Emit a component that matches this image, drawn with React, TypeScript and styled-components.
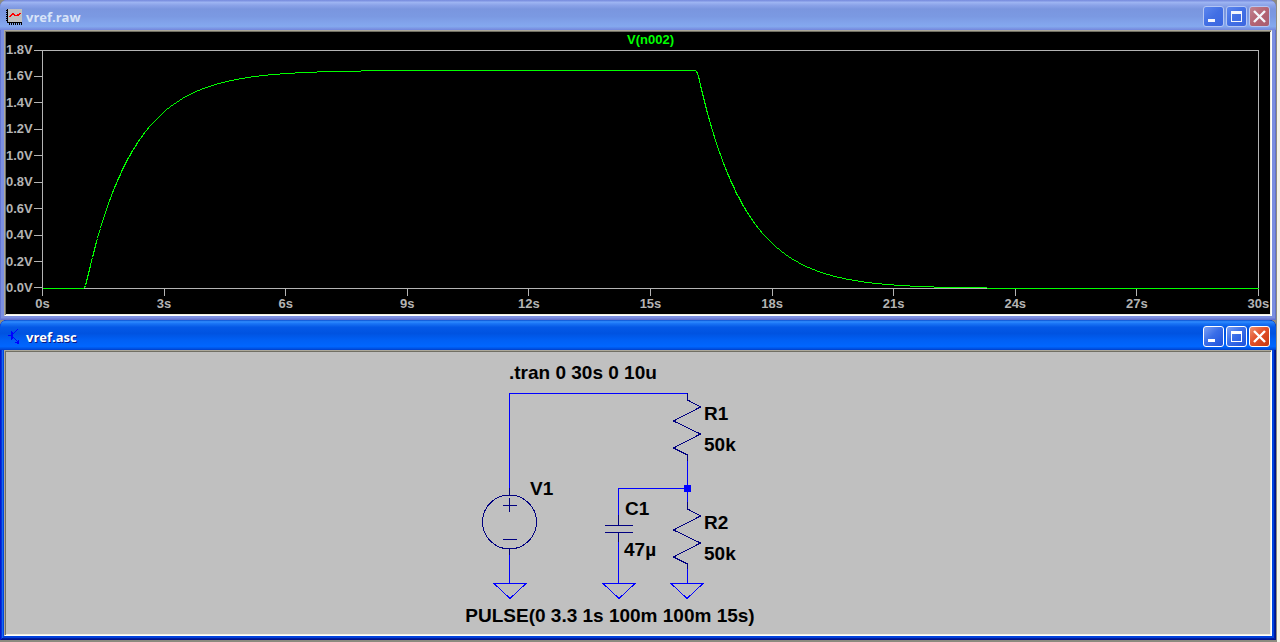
import React from "react";
import styled, { createGlobalStyle, css } from "styled-components";

const GlobalStyle = createGlobalStyle`
  * { box-sizing: border-box; }
  body { margin: 0; background: #ece9d8; }
`;

const Desktop = styled.main`
  display: flex;
  flex-direction: column;
  min-height: 100vh;
  padding-right: 4px;
  padding-bottom: 2px;
  background: linear-gradient(to right, #8d8b80 calc(100% - 3px), #f4f3ea calc(100% - 3px));
`;

const activeFrame = css`
  background: #0043e0;
  box-shadow: inset 1px 0 #0019cf, inset -1px 0 #00138c, inset 0 -1px #00138c, inset 2px 0 #0831d9,
    inset -2px 0 #001ea0, inset 0 -2px #001ea0, inset 3px 0 #166aee, inset 0 -3px #0441d8;
`;

const idleFrame = css`
  background: #7b8fe0;
  box-shadow: inset 1px 0 #6275d3, inset -1px 0 #6472cc, inset 0 -1px #6472cc, inset 0 -2px #7080d8;
`;

const Frame = styled.section<{ $active: boolean }>`
  display: flex;
  flex-direction: column;
  flex: 1 1 0;
  padding: 0 4px 4px;
  border-radius: 7px 7px 0 0;
  ${(p) => (p.$active ? activeFrame : idleFrame)}
`;

const TitleBar = styled.header<{ $active: boolean }>`
  display: flex;
  align-items: center;
  gap: 4px;
  height: 30px;
  margin: 0 -4px;
  padding: 3px 6px 0;
  border-radius: 7px 7px 0 0;
  background: ${(p) =>
    p.$active
      ? "linear-gradient(#0a4fd0 0, #2f8cff 6%, #1a74f5 12%, #0458e6 24%, #0053e1 45%, #0060f5 68%, #0066ff 88%, #0050e0 96%, #003dc8 100%)"
      : "linear-gradient(#7488dc 0, #9db4f2 8%, #8aa2e8 18%, #7a96df 30%, #7b99e2 55%, #82a4ec 78%, #84a8ee 88%, #7a92e2 96%, #7386dc 100%)"};
`;

const Title = styled.h1<{ $active: boolean }>`
  flex: 1;
  margin: 0;
  font: bold 13px/20px "Open Sans", "Noto Sans", sans-serif;
  color: ${(p) => (p.$active ? "#fff" : "#d8e4f8")};
  text-shadow: ${(p) => (p.$active ? "1px 1px #0a1883" : "none")};
`;

const Controls = styled.div`
  display: flex;
  gap: 2px;
`;

const ControlButton = styled.button<{ $active: boolean; $close?: boolean }>`
  display: grid;
  place-items: center;
  width: 21px;
  height: 21px;
  padding: 0;
  border: 1px solid ${(p) => (p.$active ? "#fff" : "#b4c6f4")};
  border-radius: 3px;
  background: ${(p) =>
    p.$close
      ? p.$active
        ? "linear-gradient(135deg, #f0906e, #e2502a 45%, #c8380f)"
        : "linear-gradient(135deg, #c08290, #b46474 50%, #a85c70)"
      : p.$active
        ? "linear-gradient(135deg, #7ba0f4, #3a6ee8 45%, #1c50dc)"
        : "linear-gradient(135deg, #5c86ee, #426fe4 50%, #3b66e0)"};
`;

const Client = styled.div<{ $dark?: boolean }>`
  display: flex;
  flex: 1;
  flex-direction: column;
  border: 1px solid;
  border-color: #aca899 #fff #fff #aca899;
  box-shadow: inset 1px 1px #716f64, inset -1px -1px #f1efe2;
  padding: 1px;
  background: ${(p) => (p.$dark ? "#000" : "#c0c0c0")};
`;

const Chart = styled.figure`
  display: grid;
  flex: 1;
  grid-template: 18px 1fr 25px / 36px 1fr;
  margin: 0;
  padding-right: 11px;
  font: bold 13px/16px "Liberation Sans", Arial, sans-serif;
  color: #b4b4b4;
`;

const TraceName = styled.figcaption`
  grid-column: 1 / -1;
  padding-left: 36px;
  line-height: 16px;
  text-align: center;
  color: #0f0;
`;

const VoltAxis = styled.div`
  display: flex;
  flex-direction: column;
  justify-content: space-between;
  margin: -8px 0 -7px;
`;

const VoltLabel = styled.span`
  display: flex;
  align-items: center;
  &::after {
    content: "";
    flex: 1;
    height: 1px;
    margin-left: 1px;
    background: #b4b4b4;
  }
`;

const PlotArea = styled.div`
  position: relative;
  min-height: 120px;
  border: 1px solid #b4b4b4;
`;

/* The trace is drawn over the plot's border. */
const Trace = styled.svg`
  position: absolute;
  top: -1px;
  left: -1px;
  width: calc(100% + 2px);
  height: calc(100% + 2px);
  overflow: visible;
`;

const TimeAxis = styled.div`
  display: flex;
  grid-column: 2;
  justify-content: space-between;
`;

const TimeLabel = styled.span`
  display: flex;
  flex-direction: column;
  align-items: center;
  width: 1px;
  white-space: nowrap;
  &::before {
    content: "";
    flex: none;
    width: 1px;
    height: 7px;
    background: #b4b4b4;
  }
`;

const Schematic = styled.svg`
  display: block;
  margin: 0 auto;
  font: bold 19px "Liberation Sans", Arial, sans-serif;
`;

const volts = ["1.8V", "1.6V", "1.4V", "1.2V", "1.0V", "0.8V", "0.6V", "0.4V", "0.2V", "0.0V"];
const times = ["0s", "3s", "6s", "9s", "12s", "15s", "18s", "21s", "24s", "27s", "30s"];

const TAU = 1.175;
const PEAK = 1.65;

/* Output of the divider for a 0 to 3.3 V pulse with 100 ms edges. */
function outputVoltage(t: number) {
  const ramp = (x: number) => {
    if (x <= 0) return 0;
    const w = 0.1;
    if (x < w) return (x - TAU * (1 - Math.exp(-x / TAU))) / w;
    return 1 - (TAU / w) * (Math.exp(w / TAU) - 1) * Math.exp(-x / TAU);
  };
  return PEAK * (ramp(t - 1) - ramp(t - 16.1));
}

const tracePoints = Array.from({ length: 1217 }, (_, i) => {
  const y = 238 - (outputVoltage((i / 1216) * 30) / 1.8) * 238;
  return `${i + 0.5},${Math.round(y) + 0.5}`;
}).join(" ");

function ChartIcon() {
  return (
    <svg width="16" height="16" viewBox="0 0 16 16" shapeRendering="crispEdges" aria-hidden="true">
      <path d="M2 0h14v14H2z" fill="#c0c0c0" />
      <path d="M1 0h1v14H1zM1 13h15v1H1z" fill="#000" />
      <path
        d="M0 1h1v1H0zM0 3h1v1H0zM0 5h1v1H0zM0 7h1v1H0zM0 9h1v1H0zM0 11h1v1H0zM3 14h1v2H3zM5 14h1v2H5zM7 14h1v2H7zM9 14h1v2H9zM11 14h1v2h-1zM13 14h1v2h-1zM15 14h1v2h-1z"
        fill="#000"
      />
      <path
        d="M3 7h1v1H3zM4 6h1v2H4zM5 5h1v2H5zM6 4h2v2H6zM8 5h1v2H8zM9 6h3v1H9zM11 5h1v2h-1zM12 5h1v2h-1zM13 4h1v2h-1zM14 4h1v1h-1z"
        fill="#f00"
      />
    </svg>
  );
}

function TransistorIcon() {
  return (
    <svg width="16" height="16" viewBox="0 0 16 16" shapeRendering="crispEdges" aria-hidden="true">
      <path
        d="M2 6h3v1H2zM5 2h1v9H5zM6 3h1v7H6zM7 4h1v1H7zM8 3h1v1H8zM9 2h1v1H9zM10 1h1v1h-1zM11 0h1v1h-1zM7 8h1v1H7zM8 9h1v1H8zM9 10h1v1H9zM10 11h1v1h-1zM11 12h1v1h-1zM9 13h4v1H9zM11 14h2v1h-2zM12 11h1v4h-1z"
        fill="#00f"
      />
    </svg>
  );
}

function WindowControls({ active }: { active: boolean }) {
  const ink = active ? "#fff" : "#f4f6fc";
  return (
    <Controls>
      <ControlButton type="button" aria-label="Minimize" $active={active}>
        <svg width="19" height="19" shapeRendering="crispEdges">
          <path d="M4 12h7v3H4z" fill={ink} />
        </svg>
      </ControlButton>
      <ControlButton type="button" aria-label="Maximize" $active={active}>
        <svg width="19" height="19" shapeRendering="crispEdges">
          <path d="M4 4h11v11H4zM5 7v7h9V7z" fill={ink} fillRule="evenodd" />
        </svg>
      </ControlButton>
      <ControlButton type="button" aria-label="Close" $active={active} $close>
        <svg width="19" height="19">
          <path d="M4 4l11 11M15 4l-11 11" stroke={ink} strokeWidth="2.4" />
        </svg>
      </ControlButton>
    </Controls>
  );
}

interface ChildWindowProps {
  title: string;
  icon: React.ReactNode;
  active?: boolean;
  dark?: boolean;
  children: React.ReactNode;
}

function ChildWindow({ title, icon, active = false, dark, children }: ChildWindowProps) {
  return (
    <Frame $active={active}>
      <TitleBar $active={active}>
        {icon}
        <Title $active={active}>{title}</Title>
        <WindowControls active={active} />
      </TitleBar>
      <Client $dark={dark}>{children}</Client>
    </Frame>
  );
}

function Waveform() {
  return (
    <Chart>
      <TraceName>V(n002)</TraceName>
      <VoltAxis>
        {volts.map((v) => (
          <VoltLabel key={v}>{v}</VoltLabel>
        ))}
      </VoltAxis>
      <PlotArea>
        <Trace viewBox="0 0 1217 239" preserveAspectRatio="none" shapeRendering="crispEdges">
          <polyline
            points={tracePoints}
            fill="none"
            stroke="#0f0"
            vectorEffect="non-scaling-stroke"
          />
        </Trace>
      </PlotArea>
      <TimeAxis>
        {times.map((t) => (
          <TimeLabel key={t}>{t}</TimeLabel>
        ))}
      </TimeAxis>
    </Chart>
  );
}

const RESISTOR = "v7l13 7l-27 14l27 13l-27 14l14 7";

function Circuit() {
  return (
    <Schematic width="360" height="280" viewBox="458 352 360 280">
      <g fill="none" shapeRendering="crispEdges">
        <path
          stroke="#00f"
          d="M509.500 488V393.500H687.500V395M687.500 461V502M618.500 515V488.500H687.500M509.500 555V583M618.500 542V583M687.500 569V583M494 583.500h32l-16 15zM603 583.500h32l-16 15zM671 583.500h32l-16 15z"
        />
        <path
          stroke="#000080"
          d={`M687.500 393${RESISTOR}V461M687.500 502${RESISTOR}V569M509.500 488V495M509.500 548V555M618.500 515V525.500M605 525.500h28M605 532.500h28M618.500 532V542M503 505.500h14M509.500 498v14M503 539.500h14`}
        />
        <circle cx="509.500" cy="522" r="27" stroke="#000080" />
      </g>
      <path d="M684 485h7v7h-7z" fill="#00f" />
      <text x="509" y="379">.tran 0 30s 0 10u</text>
      <text x="704" y="420">R1</text>
      <text x="704" y="451">50k</text>
      <text x="530" y="495">V1</text>
      <text x="625" y="515">C1</text>
      <text x="624" y="556">47µ</text>
      <text x="704" y="529">R2</text>
      <text x="704" y="560">50k</text>
      <text x="610" y="622" textAnchor="middle">
        PULSE(0 3.3 1s 100m 100m 15s)
      </text>
    </Schematic>
  );
}

export default function App() {
  return (
    <>
      <GlobalStyle />
      <Desktop>
        <ChildWindow title="vref.raw" icon={<ChartIcon />} dark>
          <Waveform />
        </ChildWindow>
        <ChildWindow title="vref.asc" icon={<TransistorIcon />} active>
          <Circuit />
        </ChildWindow>
      </Desktop>
    </>
  );
}
